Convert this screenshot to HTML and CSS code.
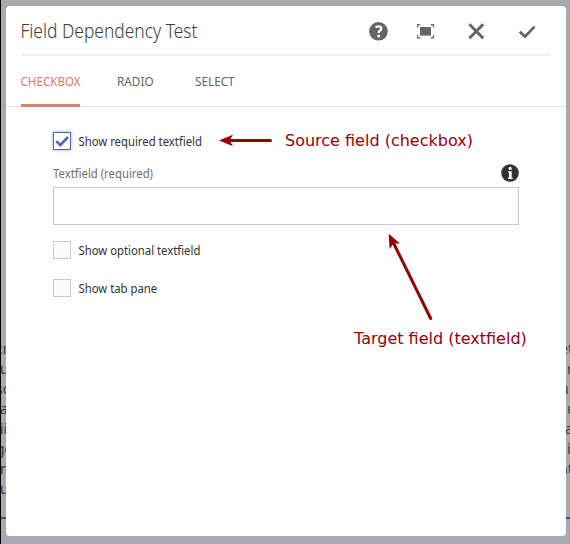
FILE: index.html
```html
<!DOCTYPE html>
<html lang="en">
<head>
<meta charset="utf-8">
<title>Field Dependency Test</title>
<link rel="stylesheet" href="styles.css">
</head>
<body>
<div class="backdrop left"><span>cr</span><span class="in">u</span><span>sc</span><span class="in">a</span><span class="in">ii</span><span>ge</span><span class="in">n</span><span class="in">u</span></div>
<div class="backdrop right"><span>et</span><span class="in">r</span><span>u</span><span class="in">u</span><span>ta</span><span class="in">i</span><span>at</span></div>
<main class="dialog">
  <header class="header">
    <h1><span class="fit title">Field Dependency Test</span></h1>
    <div class="actions">
      <svg width="20" height="20" viewBox="0 0 20 20"><circle cx="10.5" cy="10.3" r="9.3" fill="#656565"/><path d="M7.5 6.3Q8.9 5.3 10.5 5.3C13.7 5.3 13.9 8.2 12.1 9.5Q10.7 10.4 10.7 11.9" fill="none" stroke="#fff" stroke-width="2.3"/><circle cx="10.7" cy="15" r="1.5" fill="#fff"/></svg>
      <svg width="20" height="20" viewBox="0 0 20 20"><path d="M5 6h11v8.6H5z" fill="#656565"/><path d="M5.4 3.7H2.6V6.6M15.6 3.7h2.9v2.9M5.4 16.8H2.6v-2.9M15.6 16.8h2.9v-2.9" fill="none" stroke="#656565" stroke-width="1.3"/></svg>
      <svg width="20" height="20" viewBox="0 0 20 20"><path d="M3.4 3.3l13.8 14M17.2 3.3l-13.8 14" fill="none" stroke="#656565" stroke-width="3"/></svg>
      <svg width="20" height="20" viewBox="0 0 20 20"><path d="M2.7 10.7l5.3 4.9L17.5 5.6" fill="none" stroke="#656565" stroke-width="2.8"/></svg>
    </div>
  </header>
  <nav class="tabs">
    <div class="tab active"><span class="fit">CHECKBOX</span></div>
    <div class="tab radio"><span class="fit">RADIO</span></div>
    <div class="tab select"><span class="fit">SELECT</span></div>
  </nav>
  <section class="form">
    <label class="row"><span class="box checked"><svg width="16" height="16" viewBox="0 0 16 16"><path d="M2.3 8.1l4 4L14 4" fill="none" stroke="#4c64b2" stroke-width="2.7"/></svg></span><span class="fit label">Show required textfield</span></label>
    <div class="caption"><span class="fit">Textfield (required)</span>
      <svg width="18" height="18" viewBox="0 0 18 18"><circle cx="9" cy="9" r="8.8" fill="#323232"/><circle cx="9.2" cy="4.4" r="1.6" fill="#fff"/><path d="M7 7.2h3.7v6.6h1v1.2H7v-1.2h1V8.4H7z" fill="#fff"/></svg>
    </div>
    <div class="input"></div>
    <label class="row optional"><span class="box"></span><span class="fit label">Show optional textfield</span></label>
    <label class="row pane"><span class="box"></span><span class="fit label">Show tab pane</span></label>
  </section>
</main>
<svg class="arrows" width="570" height="544" viewBox="0 0 570 544"><g fill="#980006"><path d="M219 140.5L233 134.8L229.5 140.5L233 146.2Z"/><path d="M388.7 233.8L400 243.5L393.7 243.6L389.6 249Z"/></g><path d="M229 140.5H270.5M394 244L430.7 318.5" fill="none" stroke="#980006" stroke-width="3" stroke-linecap="round"/></svg>
<div class="note source">Source field (checkbox)</div>
<div class="note target">Target field (textfield)</div>
</body>
</html>
```
FILE: styles.css
```css
* { box-sizing: border-box; }
body {
  margin: 0;
  width: 570px;
  height: 544px;
  padding: 6px 4px 8px 5px;
  border-left: 1px solid #000;
  background: #a7aaaf;
  position: relative;
  overflow: hidden;
  font-family: "Noto Sans", "Open Sans", sans-serif;
  font-size: 12.5px;
  color: #323232;
}
svg { display: block; }
.dialog {
  position: relative;
  height: 530px;
  background: #fff;
  border-radius: 4px;
}
.header {
  display: flex;
  justify-content: space-between;
  height: 50px;
  margin: 0 15px;
  border-bottom: 2px solid #eee;
}
h1 { margin: 0; width: 180px; font-size: 20px; font-weight: 300; line-height: 50px; color: #3c3c3c; }
.fit { display: inline-block; white-space: nowrap; transform-origin: 0 50%; transform: scaleX(.905); }
.title { transform: translateX(-.5px) scaleX(.87); }
.label { transform: translateX(.5px) scaleX(.905); }
.actions { display: flex; gap: 31px; padding: 15px 14px 0 0; }
.actions svg:nth-child(2) { margin-left: -4px; }
.tabs {
  display: flex;
  height: 51px;
  padding-left: 15px;
  border-bottom: 1px solid #e2e2e2;
}
.tab { width: 59px; height: 51px; line-height: 51px; color: #656565; }
.tab .fit { transform: scaleX(.94); }
.active { color: #d9776c; border-bottom: 3px solid #d28577; }
.active .fit { transform: translateX(-.5px) scaleX(.93); }
.radio { margin-left: 37px; }
.select { margin-left: 19px; }
.form { padding: 25px 47px; }
.row { display: flex; height: 18px; align-items: center; gap: 7px; }
.box { flex: none; width: 18px; height: 18px; border: 1px solid #c8c8c8; background: #fafafa; }
.checked { border-color: #4c64b2; background: #fff; box-shadow: 0 0 3px #8ea4f5; }
.caption { display: flex; justify-content: space-between; align-items: center; height: 18px; margin-top: 14px; color: #707070; }
.input { height: 38px; margin-top: 5px; border: 1px solid #c8c8c8; }
.optional { margin-top: 16px; }
.pane { margin-top: 20px; }
.backdrop {
  position: absolute;
  top: 339px;
  height: 180px;
  width: 6px;
  overflow: hidden;
  border-bottom: 2px solid #415083;
  font-size: 14px;
  line-height: 20px;
  color: #34452f;
}
.backdrop span { display: block; white-space: nowrap; margin-left: -5px; }
.backdrop .in { margin-left: -1px; }
.left { left: 0; }
.right { left: 564px; }
.right .in { margin-left: 2px; }
.arrows { position: absolute; left: -1px; top: 0; }
.note { position: absolute; font: 16px/20px "DejaVu Sans", sans-serif; color: #980006; white-space: nowrap; }
.source { left: 284px; top: 131px; }
.target { left: 353px; top: 329px; }
```
